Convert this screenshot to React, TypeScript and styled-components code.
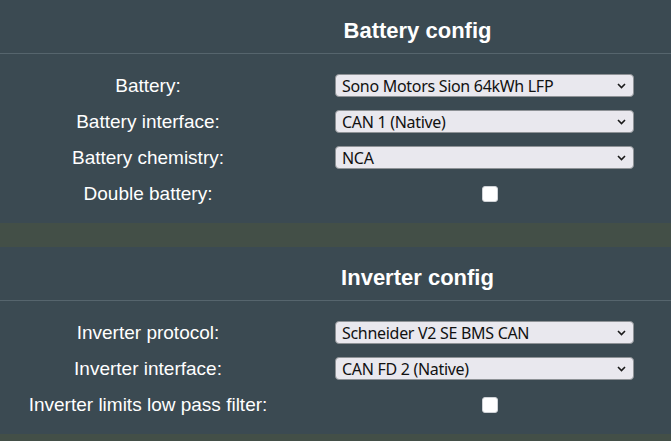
import React from "react";
import styled, { createGlobalStyle } from "styled-components";

const GlobalStyle = createGlobalStyle`
  html, body {
    margin: 0;
    padding: 0;
    background: #434f47;
    font-family: "Liberation Sans", Arial, sans-serif;
    color: #fff;
  }
`;

interface Field {
  label: string;
  value?: string;
  checkbox?: boolean;
}

const batteryFields: Field[] = [
  { label: "Battery:", value: "Sono Motors Sion 64kWh LFP" },
  { label: "Battery interface:", value: "CAN 1 (Native)" },
  { label: "Battery chemistry:", value: "NCA" },
  { label: "Double battery:", checkbox: true },
];

const inverterFields: Field[] = [
  { label: "Inverter protocol:", value: "Schneider V2 SE BMS CAN" },
  { label: "Inverter interface:", value: "CAN FD 2 (Native)" },
  { label: "Inverter limits low pass filter:", checkbox: true },
];

const Chevron = () => (
  <svg width="9" height="6" viewBox="0 0 9 6" fill="none">
    <path d="M1 1l3.5 3.5L8 1" stroke="#1a1a1a" strokeWidth="1.6" />
  </svg>
);

const ConfigSection = ({ title, fields }: { title: string; fields: Field[] }) => (
  <Section>
    <Title>{title}</Title>
    <Rows>
      {fields.map((f) => (
        <Row key={f.label}>
          <Label>{f.label}</Label>
          {f.checkbox ? (
            <Check />
          ) : (
            <Select>
              <span>{f.value}</span>
              <Chevron />
            </Select>
          )}
        </Row>
      ))}
    </Rows>
  </Section>
);

const App = () => (
  <>
    <GlobalStyle />
    <Page>
      <ConfigSection title="Battery config" fields={batteryFields} />
      <ConfigSection title="Inverter config" fields={inverterFields} />
    </Page>
  </>
);

const Page = styled("main")`
  display: flex;
  flex-direction: column;
  gap: 24px;
`;

const Section = styled("section")`
  background: #3b4a52;
  padding-bottom: 18px;
`;

const Title = styled("h2")`
  margin: 0;
  height: 54px;
  box-sizing: border-box;
  padding: 18px 0 0 164px;
  text-align: center;
  font-size: 22px;
  font-weight: bold;
  line-height: 26px;
  border-bottom: 1px solid #56656d;
`;

const Rows = styled("div")`
  display: flex;
  flex-direction: column;
  gap: 13px;
  padding-top: 20px;
`;

const Row = styled("div")`
  display: grid;
  grid-template-columns: 296px 299px;
  column-gap: 39px;
  align-items: center;
  height: 23px;
`;

const Label = styled("div")`
  text-align: center;
  font-size: 19px;
  line-height: 23px;
`;

const Select = styled("div")`
  box-sizing: border-box;
  height: 23px;
  display: flex;
  align-items: center;
  justify-content: space-between;
  padding: 0 7px 0 6px;
  background: #e9e8ee;
  border: 1px solid #8e9296;
  border-radius: 4px;
  color: #111;
  font-family: "Noto Sans", sans-serif;
  font-size: 16px;
  letter-spacing: -0.3px;
`;

const Check = styled("div")`
  justify-self: center;
  margin-left: 11px;
  width: 16px;
  height: 16px;
  box-sizing: border-box;
  background: #fff;
  border: 1px solid #cfd2d6;
  border-radius: 3px;
`;

export default App;
